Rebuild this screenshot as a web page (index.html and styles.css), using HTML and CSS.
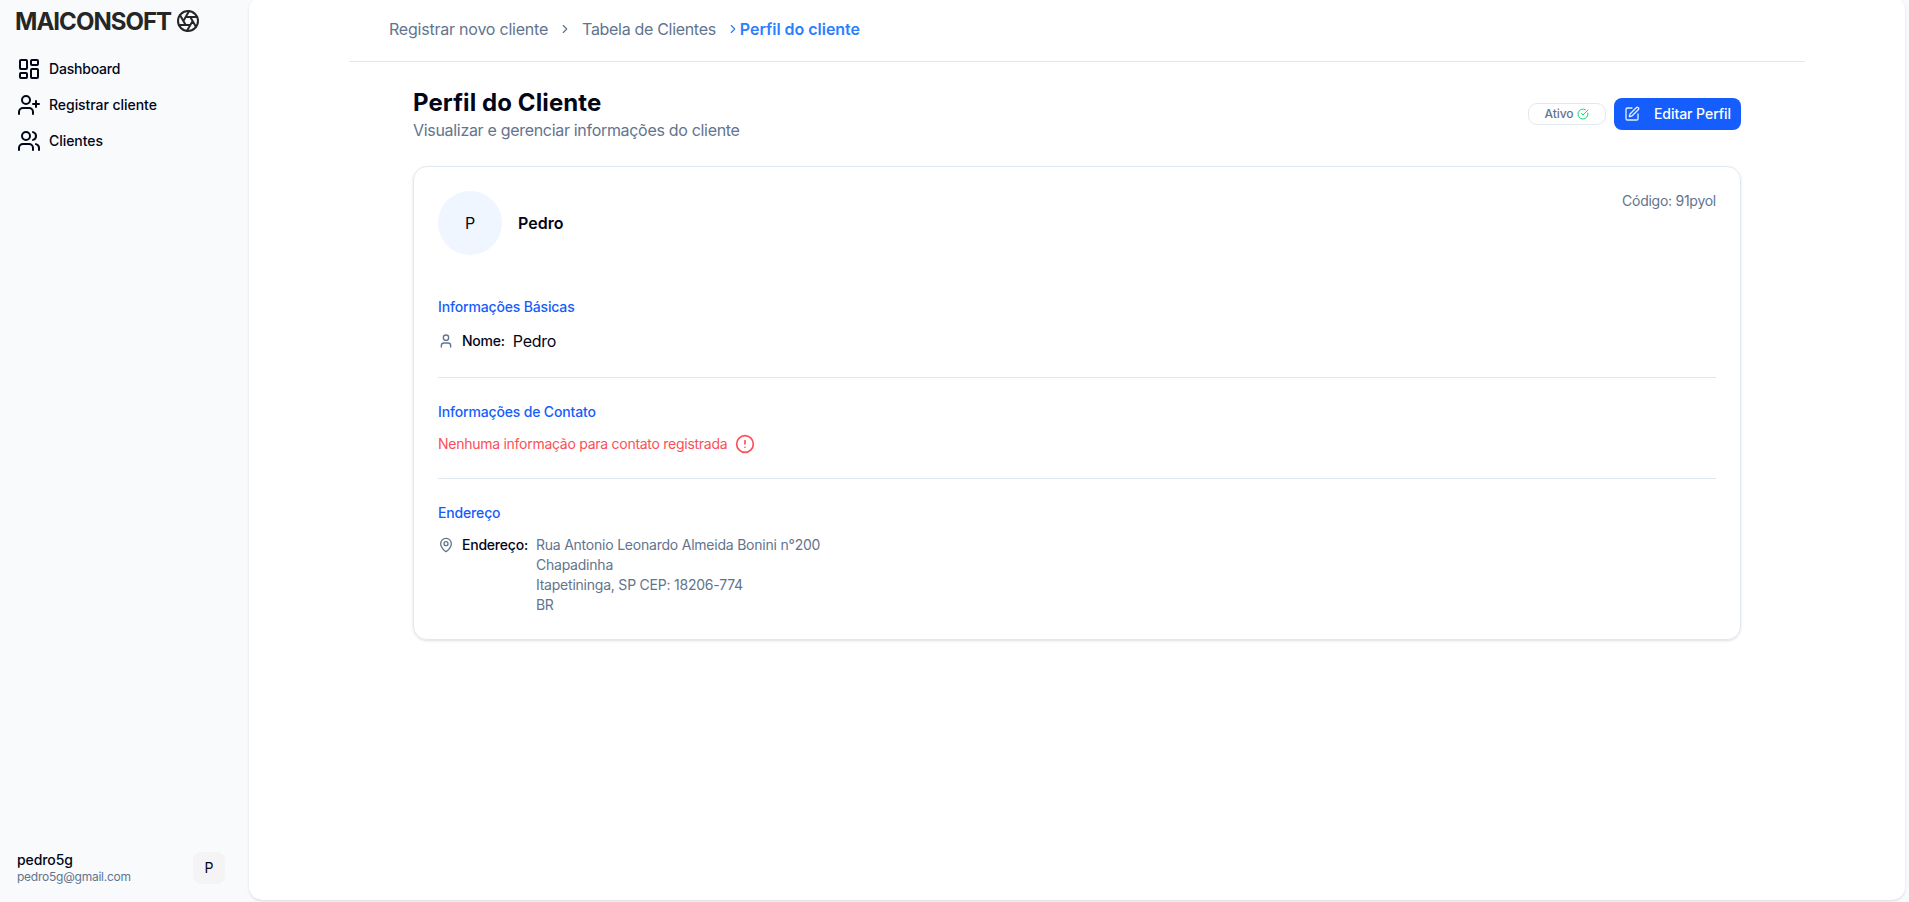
FILE: index.html
```
<!DOCTYPE html>
<html lang="pt-BR">
<head>
<meta charset="utf-8">
<title>Perfil do Cliente</title>
<link rel="stylesheet" href="styles.css">
</head>
<body>
<div class="app">
  <aside class="sidebar">
    <div class="brand">
      <span class="brand-name">MAICONSOFT</span>
      <svg class="icon i24" viewBox="0 0 24 24"><circle cx="12" cy="12" r="10"/><path d="m14.31 8 5.74 9.94M9.69 8h11.48M7.38 12l5.74-9.94M9.69 16 3.95 6.06M14.31 16H2.83M16.62 12l-5.74 9.94"/></svg>
    </div>
    <nav class="nav">
      <a class="nav-item">
        <svg class="icon i24" viewBox="0 0 24 24"><rect width="7" height="9" x="3" y="3" rx="1"/><rect width="7" height="5" x="14" y="3" rx="1"/><rect width="7" height="9" x="14" y="12" rx="1"/><rect width="7" height="5" x="3" y="16" rx="1"/></svg>
        <span class="wide">Dashboard</span>
      </a>
      <a class="nav-item">
        <svg class="icon i24" viewBox="0 0 24 24"><path d="M16 21v-2a4 4 0 0 0-4-4H6a4 4 0 0 0-4 4v2"/><circle cx="9" cy="7" r="4"/><path d="M19 8v6M22 11h-6"/></svg>
        <span>Registrar cliente</span>
      </a>
      <a class="nav-item">
        <svg class="icon i24" viewBox="0 0 24 24"><path d="M16 21v-2a4 4 0 0 0-4-4H6a4 4 0 0 0-4 4v2"/><circle cx="9" cy="7" r="4"/><path d="M22 21v-2a4 4 0 0 0-3-3.87M16 3.13a4 4 0 0 1 0 7.75"/></svg>
        <span>Clientes</span>
      </a>
    </nav>
    <div class="account">
      <div class="account-text">
        <span class="account-name">pedro5g</span>
        <span class="account-mail">pedro5g@gmail.com</span>
      </div>
      <span class="account-avatar">P</span>
    </div>
  </aside>

  <main class="panel">
    <header class="crumbs">
      <a class="crumb crumb-first">Registrar novo cliente</a>
      <svg class="icon chevron c1" viewBox="0 0 24 24"><path d="m9 18 6-6-6-6"/></svg>
      <a class="crumb crumb-second">Tabela de Clientes</a>
      <span class="crumb-current"><svg class="icon chevron" viewBox="0 0 24 24"><path d="m9 18 6-6-6-6"/></svg><b>Perfil do cliente</b></span>
    </header>

    <section class="content">
      <div class="heading">
        <div>
          <h1>Perfil do Cliente</h1>
          <p>Visualizar e gerenciar informações do cliente</p>
        </div>
        <div class="actions">
          <span class="badge">Ativo
            <svg class="icon i12" viewBox="0 0 24 24"><path d="M21.801 10A10 10 0 1 1 17 3.335"/><path d="m9 11 3 3L22 4"/></svg>
          </span>
          <button class="edit">
            <svg class="icon i16" viewBox="0 0 24 24"><path d="M12 3H5a2 2 0 0 0-2 2v14a2 2 0 0 0 2 2h14a2 2 0 0 0 2-2v-7"/><path d="M18.375 2.625a1 1 0 0 1 3 3l-9.013 9.014a2 2 0 0 1-.853.505l-2.873.84a.5.5 0 0 1-.62-.62l.84-2.873a2 2 0 0 1 .506-.852z"/></svg>
            <span>Editar Perfil</span>
          </button>
        </div>
      </div>

      <article class="card">
        <div class="card-head">
          <span class="avatar">P</span>
          <span class="client-name">Pedro</span>
          <span class="code">Código: 91pyol</span>
        </div>

        <section class="block basic">
          <h2>Informações Básicas</h2>
          <div class="row">
            <svg class="icon i16 muted" viewBox="0 0 24 24"><path d="M19 21v-2a4 4 0 0 0-4-4H9a4 4 0 0 0-4 4v2"/><circle cx="12" cy="7" r="4"/></svg>
            <span class="label">Nome:</span>
            <span class="value">Pedro</span>
          </div>
        </section>

        <section class="block contact">
          <h2>Informações de Contato</h2>
          <div class="warning">
            <span>Nenhuma informação para contato registrada</span>
            <svg class="icon i20" viewBox="0 0 24 24"><circle cx="12" cy="12" r="10"/><path d="M12 8v4M12 16h.01"/></svg>
          </div>
        </section>

        <section class="block place">
          <h2>Endereço</h2>
          <div class="row top">
            <svg class="icon i16 muted pin" viewBox="0 0 24 24"><path d="M20 10c0 4.993-5.539 10.193-7.399 11.799a1 1 0 0 1-1.202 0C9.539 20.193 4 14.993 4 10a8 8 0 0 1 16 0"/><circle cx="12" cy="10" r="3"/></svg>
            <span class="label">Endereço:</span>
            <address>Rua Antonio Leonardo Almeida Bonini n°200<br>Chapadinha<br>Itapetininga, SP CEP: 18206-774<br>BR</address>
          </div>
        </section>
      </article>
    </section>
  </main>
</div>
</body>
</html>
```
FILE: styles.css
```
* { box-sizing: border-box; margin: 0; }
body {
  font-family: Inter, "Liberation Sans", sans-serif;
  font-size: 14px;
  line-height: 20px;
  color: #020618;
  background: #f8fafc;
}
.app { display: flex; height: 902px; overflow: hidden; }

.icon {
  flex: none;
  fill: none;
  stroke: currentColor;
  stroke-width: 2;
  stroke-linecap: round;
  stroke-linejoin: round;
}
.i24 { width: 24px; height: 24px; }
.i20 { width: 20px; height: 20px; }
.i16 { width: 16px; height: 16px; }
.i12 { width: 12px; height: 12px; }
.muted { color: #62748e; }

.sidebar {
  width: 249px;
  flex: none;
  display: flex;
  flex-direction: column;
  padding: 5px 24px 16px 16px;
}
.brand {
  display: flex;
  align-items: center;
  gap: 5px;
  height: 32px;
  margin-left: -1px;
  color: #262626;
}
.brand-name {
  padding-top: 1px;
  font-size: 24px;
  font-weight: 700;
  line-height: 32px;
  letter-spacing: -0.97px;
}
.nav { display: flex; flex-direction: column; gap: 4px; margin-top: 16px; }
.nav-item {
  display: flex;
  align-items: center;
  gap: 8px;
  height: 32px;
  padding-left: 1px;
  font-weight: 500;
  letter-spacing: -0.05px;
}
.nav-item .wide { letter-spacing: -0.2px; }

.account {
  display: flex;
  align-items: center;
  justify-content: space-between;
  margin-top: auto;
  padding-left: 1px;
  height: 36px;
}
.account-text { display: flex; flex-direction: column; padding-bottom: 2px; }
.account-name { font-weight: 500; line-height: 18px; letter-spacing: -0.1px; }
.account-mail { font-size: 12px; line-height: 15px; color: #62748e; letter-spacing: -0.24px; }
.account-avatar {
  display: grid;
  place-items: center;
  width: 32px;
  height: 32px;
  border-radius: 8px;
  background: #f4f4f5;
}

.panel {
  flex: 1;
  margin: -3px 4px 2px 0;
  padding: 0 100px;
  border-radius: 13px;
  background: #fff;
  box-shadow: 0 1px 3px rgb(0 0 0 / .1), 0 1px 2px -1px rgb(0 0 0 / .1);
}
.crumbs {
  display: flex;
  align-items: center;
  height: 65px;
  padding-left: 40px;
  border-bottom: 1px solid #e2e8f0;
  font-size: 16px;
  line-height: 24px;
}
.crumb { color: #62748e; }
.crumb-first { letter-spacing: -0.22px; }
.crumb-second { margin-left: 10px; letter-spacing: -0.31px; }
.chevron { width: 14px; height: 14px; }
.c1 { margin-left: 10px; color: #62748e; }
.crumb-current {
  display: flex;
  align-items: center;
  margin-left: 10px;
  color: #2b7fff;
}
.crumb-current b { font-weight: 600; letter-spacing: -0.03px; }

.content { padding: 24px 64px; }
.heading {
  display: flex;
  align-items: center;
  justify-content: space-between;
  height: 56px;
}
h1 { height: 32px; font-size: 24px; line-height: 34px; font-weight: 700; letter-spacing: 0.1px; }
.heading p { font-size: 16px; line-height: 24px; color: #62748e; letter-spacing: -0.31px; }
.actions { display: flex; align-items: center; gap: 8px; }
.badge {
  display: flex;
  align-items: center;
  justify-content: center;
  gap: 4px;
  width: 78px;
  height: 22px;
  border: 1px solid #e2e8f0;
  border-radius: 9px;
  font-size: 12px;
  font-weight: 500;
  line-height: 16px;
  letter-spacing: -0.1px;
  color: #62748e;
}
.badge .icon { color: #05df72; }
.edit {
  display: flex;
  align-items: center;
  justify-content: space-between;
  width: 127px;
  height: 32px;
  padding: 0 10px;
  border: 0;
  border-radius: 8px;
  background: #155dfc;
  color: #fff;
  font: inherit;
  font-weight: 500;
  letter-spacing: -0.05px;
  white-space: nowrap;
}
.edit .icon { opacity: .9; }

.card {
  height: 474px;
  margin-top: 24px;
  padding: 24px;
  border: 1px solid #e2e8f0;
  border-radius: 14px;
  box-shadow: 0 1px 3px rgb(0 0 0 / .1), 0 1px 2px -1px rgb(0 0 0 / .1);
}
.card-head { display: flex; align-items: center; gap: 16px; height: 64px; font-size: 16px; }
.avatar {
  display: grid;
  place-items: center;
  width: 64px;
  height: 64px;
  border-radius: 50%;
  background: #eff6ff;
}
.client-name { font-weight: 600; }
.code {
  align-self: flex-start;
  margin-left: auto;
  font-size: 14px;
  color: #62748e;
  letter-spacing: -0.26px;
}
h2 { font-size: 14px; line-height: 20px; font-weight: 500; color: #155dfc; letter-spacing: -0.16px; }
.basic { height: 123px; padding-top: 42px; border-bottom: 1px solid #e2e8f0; }
.contact { height: 101px; padding-top: 24px; border-bottom: 1px solid #e2e8f0; }
.place { padding-top: 24px; }
.row { display: flex; align-items: center; gap: 8px; height: 24px; margin-top: 12px; }
.row.top { align-items: flex-start; height: auto; }
.pin { margin-top: 2px; }
.label { font-weight: 500; letter-spacing: -0.22px; }
.value { font-size: 16px; letter-spacing: -0.3px; }
.warning {
  display: flex;
  align-items: center;
  gap: 8px;
  height: 20px;
  margin-top: 12px;
  color: #fb4f58;
  letter-spacing: -0.27px;
}
address { font-style: normal; color: #62748e; letter-spacing: -0.22px; }
```
